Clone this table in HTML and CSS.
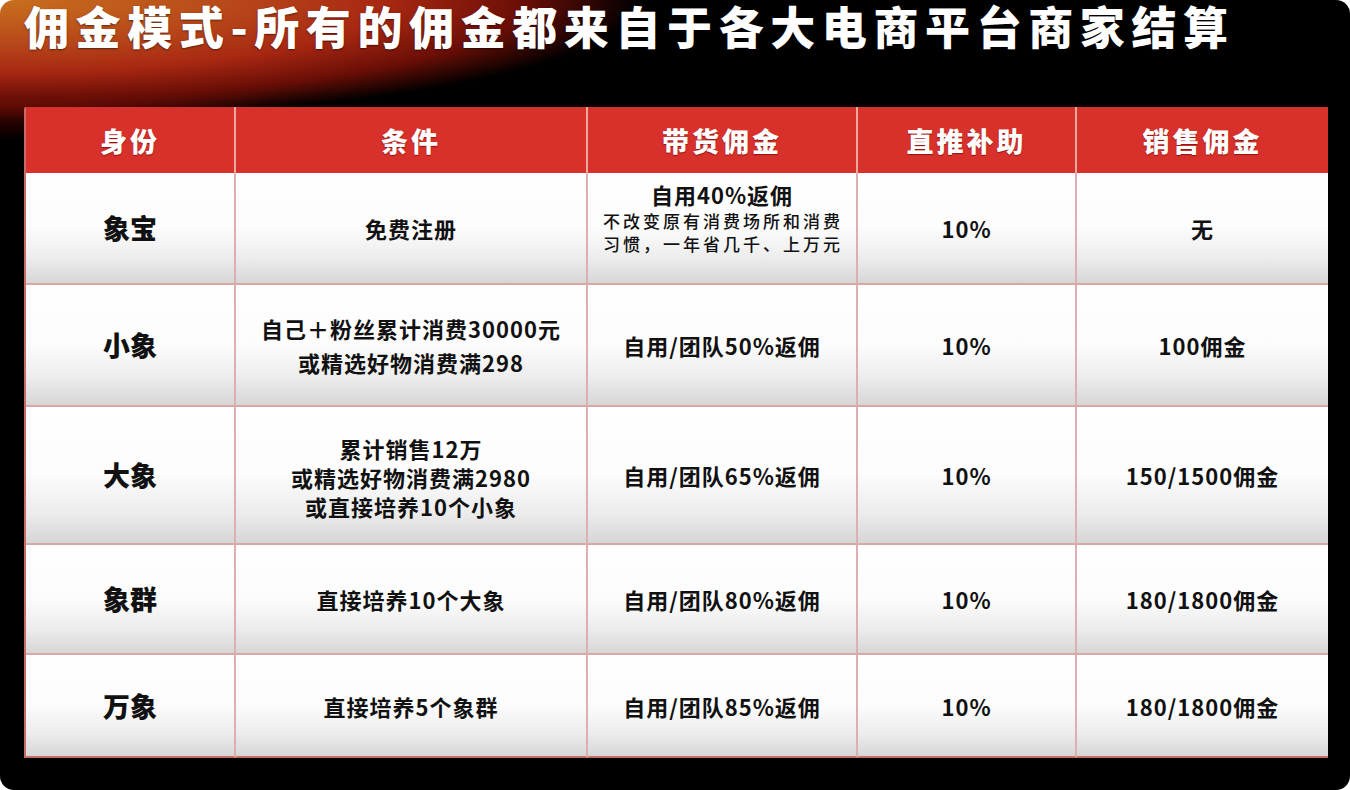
FILE: index.html
```html
<!DOCTYPE html>
<html lang="zh-CN">
<head>
<meta charset="utf-8">
<title>佣金模式</title>
<link rel="stylesheet" href="styles.css">
</head>
<body>
<div class="page">
  <h1 class="title">佣金模式-所有的佣金都来自于各大电商平台商家结算</h1>
  <div class="table">
    <div class="th">身份</div>
    <div class="th">条件</div>
    <div class="th">带货佣金</div>
    <div class="th">直推补助</div>
    <div class="th last">销售佣金</div>

    <div class="td name">象宝</div>
    <div class="td">免费注册</div>
    <div class="td stack up">
      <span>自用40%返佣</span>
      <span class="note">不改变原有消费场所和消费<br>习惯，一年省几千、上万元</span>
    </div>
    <div class="td">10%</div>
    <div class="td last">无</div>

    <div class="td name">小象</div>
    <div class="td lines2">自己＋粉丝累计消费30000元<br>或精选好物消费满298</div>
    <div class="td">自用/团队50%返佣</div>
    <div class="td">10%</div>
    <div class="td last">100佣金</div>

    <div class="td name">大象</div>
    <div class="td lines3">累计销售12万<br>或精选好物消费满2980<br>或直接培养10个小象</div>
    <div class="td">自用/团队65%返佣</div>
    <div class="td">10%</div>
    <div class="td last">150/1500佣金</div>

    <div class="td name">象群</div>
    <div class="td">直接培养10个大象</div>
    <div class="td">自用/团队80%返佣</div>
    <div class="td">10%</div>
    <div class="td last">180/1800佣金</div>

    <div class="td name bottom">万象</div>
    <div class="td bottom">直接培养5个象群</div>
    <div class="td bottom">自用/团队85%返佣</div>
    <div class="td bottom">10%</div>
    <div class="td bottom last">180/1800佣金</div>
  </div>
</div>
</body>
</html>
```

FILE: styles.css
```css
* { box-sizing: border-box; }
html, body { margin: 0; padding: 0; background: #ffffff; }
body {
  width: 1350px;
  height: 790px;
  overflow: hidden;
  font-family: "Noto Sans CJK SC", "Noto Sans", sans-serif;
}
.page {
  width: 1350px;
  height: 790px;
  border-radius: 14px;
  overflow: hidden;
  background-color: #000;
  background-image:
    radial-gradient(640px 120px at 0 0, #c8701e 0%, #b8491a 35%, #a82812 60%, #6a0e06 82%, rgba(0,0,0,0) 100%),
    radial-gradient(300px 70px at 0 70px, rgba(200,40,20,0.8) 0%, rgba(120,10,5,0.5) 60%, rgba(0,0,0,0) 100%);
  background-repeat: no-repeat;
  display: flex;
  flex-direction: column;
  padding: 0 0 0 24px;
}
.title {
  margin: 0;
  padding-top: 0;
  height: 54px;
  line-height: 52px;
  font-size: 45px;
  font-weight: 900;
  letter-spacing: 6.6px;
  color: #fff;
  white-space: nowrap;
  text-shadow: 0 1px 2px rgba(0,0,0,0.5);
}
.table {
  margin-top: 53px;
  width: 1302px;
  display: grid;
  grid-template-columns: 210px 352px 270px 219px 251px;
  grid-template-rows: 66px 112px 122px 138px 110px 103px;
  border-left: 2px solid #c96a66;
  border-right: 2px solid #b64a48;
  border-radius: 2px 2px 0 0;
}
.th {
  background: #d8302a;
  color: #fff;
  font-size: 27px;
  font-weight: 900;
  letter-spacing: 3px;
  display: flex;
  align-items: center;
  justify-content: center;
  border-right: 2px solid #eda89c;
  text-shadow: 0 1px 1px rgba(90,0,0,0.6);
}
.th.last, .td.last { border-right: none; }
.td {
  background: linear-gradient(to bottom, #ffffff 0%, #fcfcfc 50%, #ececec 78%, #d6d6d6 100%);
  color: #111;
  font-size: 22px;
  font-weight: 700;
  letter-spacing: 1px;
  text-align: center;
  display: flex;
  flex-direction: column;
  align-items: center;
  justify-content: center;
  border-right: 2px solid #dcb0ae;
  border-bottom: 2px solid #d9a8a6;
  line-height: 30px;
}
.td.bottom { border-bottom: 2px solid #c46e6a; }
.td.name { font-size: 27px; font-weight: 900; letter-spacing: 0; }
.td.lines2 { line-height: 34px; }
.td.lines3 { line-height: 29px; padding-top: 4px; }
.td.up { justify-content: flex-start; padding-top: 6px; }
.td.stack span { display: block; }
.note {
  font-size: 17px;
  font-weight: 500;
  letter-spacing: 3px;
  line-height: 23px;
  margin-left: 2px;
}
```
